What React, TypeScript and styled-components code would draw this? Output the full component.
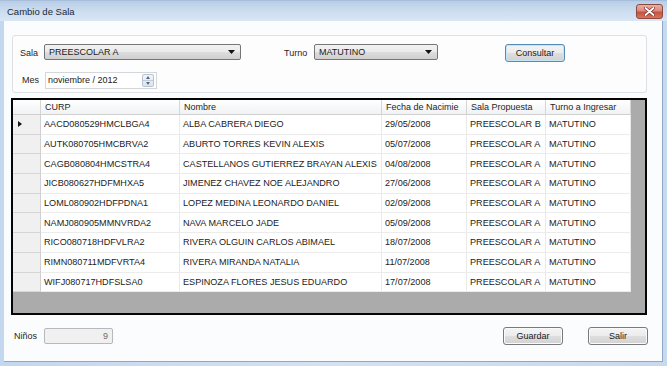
import styled, { createGlobalStyle } from 'styled-components';

const GlobalStyle = createGlobalStyle`
  html, body {
    margin: 0;
    padding: 0;
    background: #fff;
  }

  body {
    font-family: 'Liberation Sans', Arial, sans-serif;
    font-size: 9px;
    color: #222;
  }
`;

const students = [
  { curp: 'AACD080529HMCLBGA4', nombre: 'ALBA CABRERA DIEGO', fecha: '29/05/2008', sala: 'PREESCOLAR B' },
  { curp: 'AUTK080705HMCBRVA2', nombre: 'ABURTO TORRES KEVIN ALEXIS', fecha: '05/07/2008', sala: 'PREESCOLAR A' },
  { curp: 'CAGB080804HMCSTRA4', nombre: 'CASTELLANOS GUTIERREZ BRAYAN ALEXIS', fecha: '04/08/2008', sala: 'PREESCOLAR A' },
  { curp: 'JICB080627HDFMHXA5', nombre: 'JIMENEZ CHAVEZ NOE ALEJANDRO', fecha: '27/06/2008', sala: 'PREESCOLAR A' },
  { curp: 'LOML080902HDFPDNA1', nombre: 'LOPEZ MEDINA LEONARDO DANIEL', fecha: '02/09/2008', sala: 'PREESCOLAR A' },
  { curp: 'NAMJ080905MMNVRDA2', nombre: 'NAVA MARCELO JADE', fecha: '05/09/2008', sala: 'PREESCOLAR A' },
  { curp: 'RICO080718HDFVLRA2', nombre: 'RIVERA OLGUIN CARLOS ABIMAEL', fecha: '18/07/2008', sala: 'PREESCOLAR A' },
  { curp: 'RIMN080711MDFVRTA4', nombre: 'RIVERA MIRANDA NATALIA', fecha: '11/07/2008', sala: 'PREESCOLAR A' },
  { curp: 'WIFJ080717HDFSLSA0', nombre: 'ESPINOZA FLORES JESUS EDUARDO', fecha: '17/07/2008', sala: 'PREESCOLAR A' },
];

const columns = ['CURP', 'Nombre', 'Fecha de Nacimie', 'Sala Propuesta', 'Turno a Ingresar'];

const CloseIcon = () => (
  <svg width='11' height='9' viewBox='0 0 11 9'>
    <path d='M1.5 1 L9.5 8 M9.5 1 L1.5 8' stroke='#7a2a20' strokeWidth='3.2' strokeLinecap='round' />
    <path d='M1.5 1 L9.5 8 M9.5 1 L1.5 8' stroke='#fff' strokeWidth='1.8' strokeLinecap='round' />
  </svg>
);

const ComboArrow = () => (
  <svg width='7' height='4' viewBox='0 0 7 4'>
    <path d='M0 0 L7 0 L3.5 4 Z' fill='#111' />
  </svg>
);

function App() {
  return (
    <>
      <GlobalStyle />
      <StyledWindow>
        <StyledTitleBar>
          <StyledTitle>Cambio de Sala</StyledTitle>
          <StyledCloseButton>
            <CloseIcon />
          </StyledCloseButton>
        </StyledTitleBar>
        <StyledClient>
          <StyledGroup>
            <StyledFormRow>
              <StyledLabel $width={24}>Sala</StyledLabel>
              <StyledCombo $width={197}>
                <span>PREESCOLAR A</span>
                <ComboArrow />
              </StyledCombo>
              <StyledLabel $width={30} $offset={43}>
                Turno
              </StyledLabel>
              <StyledCombo $width={124}>
                <span>MATUTINO</span>
                <ComboArrow />
              </StyledCombo>
              <StyledButton $focused $offset={67}>
                Consultar
              </StyledButton>
            </StyledFormRow>
            <StyledFormRow $top={9}>
              <StyledLabel $width={23} $offset={2}>
                Mes
              </StyledLabel>
              <StyledDateField>
                <span>noviembre / 2012</span>
                <StyledSpinner>
                  <StyledSpinArrow />
                  <StyledSpinArrow $down />
                </StyledSpinner>
              </StyledDateField>
            </StyledFormRow>
          </StyledGroup>

          <StyledDataGrid>
            <StyledTable>
              <StyledHeaderCell />
              {columns.map(column => (
                <StyledHeaderCell key={column}>{column}</StyledHeaderCell>
              ))}
              {students.map((student, index) => (
                <StyledRow key={student.curp}>
                  <StyledRowHeader>{index === 0 && <StyledPointer />}</StyledRowHeader>
                  <StyledCell>{student.curp}</StyledCell>
                  <StyledCell>{student.nombre}</StyledCell>
                  <StyledCell>{student.fecha}</StyledCell>
                  <StyledCell>{student.sala}</StyledCell>
                  <StyledCell>MATUTINO</StyledCell>
                </StyledRow>
              ))}
            </StyledTable>
          </StyledDataGrid>

          <StyledFooter>
            <StyledLabel $width={30} $offset={3}>
              Niños
            </StyledLabel>
            <StyledCountField>9</StyledCountField>
            <StyledSpacer />
            <StyledButton>Guardar</StyledButton>
            <StyledButton $offset={25}>Salir</StyledButton>
          </StyledFooter>
        </StyledClient>
      </StyledWindow>
    </>
  );
}

export default App;

const StyledWindow = styled.div`
  display: flex;
  flex-direction: column;

  width: 667px;
  height: 366px;

  box-sizing: border-box;

  background: linear-gradient(90deg, #c3d7ee 0%, #d3e2f3 50%, #c6d9ee 100%);
`;

const StyledTitleBar = styled.div`
  display: flex;
  justify-content: space-between;
  align-items: center;

  height: 21px;
  padding: 0 4px 0 7px;

  background: linear-gradient(#b9cee6 0%, #cddef0 55%, #d9e6f4 100%);
  border-top: 1px solid #a6bedb;
  box-sizing: border-box;
`;

const StyledTitle = styled.div`
  font-size: 9.5px;
  color: #1a2838;
  margin-top: 1px;
`;

const StyledCloseButton = styled.div`
  display: flex;
  justify-content: center;
  align-items: center;

  width: 25px;
  height: 13px;
  margin-top: 1px;

  border: 1px solid #8a4a40;
  border-radius: 3px;
  background: linear-gradient(#e7b0a4 0%, #dc8a7c 45%, #c9503e 55%, #d9735e 100%);
`;

const StyledClient = styled.div`
  display: flex;
  flex-direction: column;

  flex: 1;
  margin: 0 4px 4px 4px;
  padding: 14px 0 0 7px;

  background: #fbfcfe;
  border-right: 1px solid #8fa8c6;
  border-bottom: 1px solid #8fa8c6;
  box-sizing: border-box;
`;

const StyledGroup = styled.div`
  display: flex;
  flex-direction: column;

  width: 635px;
  height: 58px;
  margin-left: 1px;
  padding: 8px 0 0 7px;

  border: 1px solid #dde1e6;
  border-radius: 3px;
  background: #fdfdfe;
  box-sizing: border-box;
`;

const StyledFormRow = styled.div<{ $top?: number }>`
  display: flex;
  align-items: center;

  height: 18px;
  margin-top: ${({ $top }) => $top ?? 0}px;
`;

const StyledLabel = styled.div<{ $width: number; $offset?: number }>`
  width: ${({ $width }) => $width}px;
  margin-left: ${({ $offset }) => $offset ?? 0}px;

  font-size: 9px;
  color: #262626;
  white-space: nowrap;
`;

const StyledCombo = styled.div<{ $width: number }>`
  display: flex;
  justify-content: space-between;
  align-items: center;

  width: ${({ $width }) => $width}px;
  height: 16px;
  padding: 0 5px 0 4px;
  align-self: flex-start;

  border: 1px solid #767676;
  border-radius: 2px;
  background: linear-gradient(#f2f2f2 0%, #ebebeb 48%, #dddddd 52%, #cfcfcf 100%);
  box-sizing: border-box;

  font-size: 9px;
  color: #1a1a1a;
`;

const StyledButton = styled.div<{ $focused?: boolean; $offset?: number }>`
  display: flex;
  justify-content: center;
  align-items: center;

  width: 60px;
  height: 18px;
  margin-left: ${({ $offset }) => $offset ?? 0}px;

  border: 1px solid ${({ $focused }) => ($focused ? '#4f8cbc' : '#7a7a7a')};
  border-radius: 3px;
  box-shadow: ${({ $focused }) => ($focused ? 'inset 0 0 0 1px #c4e6f8' : 'inset 0 0 0 1px #fafafa')};
  background: linear-gradient(#f4f4f4 0%, #ececec 48%, #dedede 52%, #d2d2d2 100%);
  box-sizing: border-box;

  font-size: 9px;
  color: #1a1a1a;
`;

const StyledDateField = styled.div`
  display: flex;
  justify-content: space-between;
  align-items: center;

  width: 112px;
  height: 17px;
  padding: 0 2px 0 2px;

  border: 1px solid #d3d6da;
  background: #fff;
  box-sizing: border-box;

  font-size: 9px;
  color: #1a1a1a;
`;

const StyledSpinner = styled.div`
  display: flex;
  flex-direction: column;

  width: 12px;
  height: 13px;

  border: 1px solid #b9c3cf;
  border-radius: 2px;
  background: linear-gradient(#f3f6f9, #dde4ec);
  box-sizing: border-box;
`;

const StyledSpinArrow = styled.div<{ $down?: boolean }>`
  flex: 1;

  display: flex;
  justify-content: center;
  align-items: center;

  border-top: ${({ $down }) => ($down ? '1px solid #c4ccd6' : 'none')};

  &::after {
    content: '';
    border-left: 2.5px solid transparent;
    border-right: 2.5px solid transparent;
    ${({ $down }) => ($down ? 'border-top: 3px solid #4d6b8c;' : 'border-bottom: 3px solid #4d6b8c;')}
  }
`;

const StyledDataGrid = styled.div`
  width: 636px;
  height: 217px;
  margin-top: 5px;

  border: 2px solid #050505;
  background: #ababab;
  box-sizing: border-box;
  overflow: hidden;
`;

const StyledTable = styled.div`
  display: grid;
  grid-template-columns: 28px 139px 202px 85px 79px 85px;
  grid-template-rows: 15px repeat(9, 19.7px);

  width: max-content;
`;

const StyledRow = styled.div`
  display: contents;
`;

const StyledHeaderCell = styled.div`
  display: flex;
  align-items: center;

  padding-left: 4px;

  background: linear-gradient(#ffffff, #f1f2f4);
  border-right: 1px solid #d5d5d5;
  border-bottom: 1px solid #d0d0d0;
  box-sizing: border-box;

  font-size: 9px;
  color: #262626;
  white-space: nowrap;
  overflow: hidden;
`;

const StyledRowHeader = styled.div`
  display: flex;
  align-items: center;

  padding-left: 5px;

  background: #f0f0f0;
  border-right: 1px solid #d0d0d0;
  border-bottom: 1px solid #d6d6d6;
  box-sizing: border-box;
`;

const StyledPointer = styled.div`
  border-top: 3.5px solid transparent;
  border-bottom: 3.5px solid transparent;
  border-left: 4px solid #111;
`;

const StyledCell = styled.div`
  display: flex;
  align-items: center;

  padding-left: 3px;

  background: #fff;
  border-right: 1px solid #e9e9e9;
  border-bottom: 1px solid #ececec;
  box-sizing: border-box;

  font-size: 9.1px;
  color: #222;
  white-space: nowrap;
  overflow: hidden;
`;

const StyledFooter = styled.div`
  display: flex;
  align-items: center;

  height: 18px;
  margin-top: 12px;
  padding-right: 14px;
`;

const StyledCountField = styled.div`
  display: flex;
  justify-content: flex-end;
  align-items: center;

  width: 69px;
  height: 16px;
  padding-right: 4px;

  border: 1px solid #b5b9be;
  border-radius: 2px;
  background: #f0f0f0;
  box-sizing: border-box;

  font-size: 9px;
  color: #6d6d6d;
`;

const StyledSpacer = styled.div`
  flex: 1;
`;
